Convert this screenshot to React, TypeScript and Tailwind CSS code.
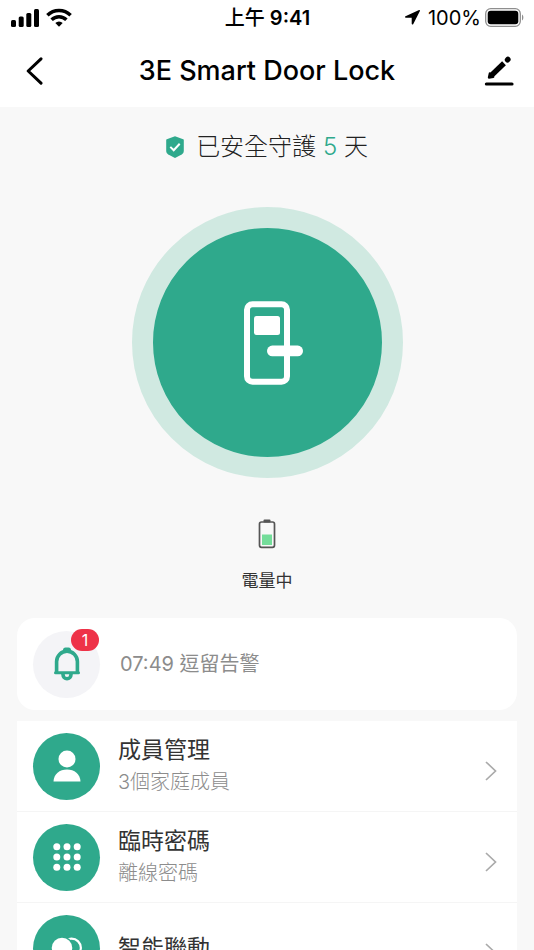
import type { ReactNode } from "react";

interface MenuRowProps {
  title: string;
  subtitle?: string;
  icon: ReactNode;
}

function SignalIcon() {
  return (
    <svg width="28" height="18" viewBox="0 0 28 18" fill="currentColor" aria-hidden="true">
      <rect x="0" y="11" width="5" height="7" rx="1.5" />
      <rect x="7.7" y="7.5" width="5" height="10.5" rx="1.5" />
      <rect x="15.3" y="4" width="5" height="14" rx="1.5" />
      <rect x="23" y="0" width="5" height="18" rx="1.5" />
    </svg>
  );
}

function WifiIcon() {
  return (
    <svg width="26" height="19" viewBox="0 0 26 19" fill="none" stroke="currentColor" strokeWidth="3.5" aria-hidden="true">
      <path d="M1.4 7.2a16.6 16.6 0 0 1 23.2 0" />
      <path d="M5.6 11.8a10.6 10.6 0 0 1 14.8 0" />
      <path d="M13 18.8l-3.7-3.7a5.3 5.3 0 0 1 7.4 0z" fill="currentColor" stroke="none" />
    </svg>
  );
}

function LocationIcon() {
  return (
    <svg width="15" height="15" viewBox="0 0 15 15" fill="currentColor" aria-hidden="true">
      <path d="M14.1.1.5 6.3c-.8.4-.6 1.5.3 1.5h5.6c.2 0 .3.1.3.3v5.7c0 .9 1.200 1.1 1.6.3L14.9 1c.3-.6-.2-1.1-.8-.9z" />
    </svg>
  );
}

function FullBatteryIcon() {
  return (
    <svg width="39" height="19" viewBox="0 0 39 19" aria-hidden="true">
      <rect x="0.7" y="0.7" width="34.6" height="17.6" rx="5" fill="none" stroke="#8e8e8e" strokeWidth="1.3" />
      <rect x="2.7" y="2.7" width="30.6" height="13.6" rx="3" fill="#000" />
      <path d="M37 6.5v6c1.8-.8 1.8-5.2 0-6z" fill="#8e8e8e" />
    </svg>
  );
}

function StatusBar() {
  return (
    <div className="grid h-[35px] grid-cols-3 items-center pr-[10px] pl-[11px] text-xl text-black">
      <div className="flex items-center gap-[7px]">
        <SignalIcon />
        <WifiIcon />
      </div>
      <div className="text-center font-semibold whitespace-nowrap">
        <span className="font-medium">上午</span> 9:41
      </div>
      <div className="flex items-center justify-end">
        <LocationIcon />
        <span className="mr-1 ml-2">100%</span>
        <FullBatteryIcon />
      </div>
    </div>
  );
}

function Header() {
  return (
    <header className="flex h-[72px] items-center justify-between px-5">
      <button type="button" aria-label="返回" className="flex w-8 justify-start pl-[6px]">
        <svg width="17" height="28" viewBox="0 0 17 28" fill="none" stroke="#000" strokeWidth="3" strokeLinecap="round" strokeLinejoin="round">
          <path d="M15 1.8 2.2 14 15 26.2" />
        </svg>
      </button>
      <h1 className="text-[27px] font-medium text-black">3E Smart Door Lock</h1>
      <button type="button" aria-label="編輯" className="flex w-8 justify-end">
        <svg width="30" height="30" viewBox="0 0 30 30" fill="none" stroke="#000" strokeLinecap="round">
          <path d="M7.8 19 20 7.2" strokeWidth="5.4" strokeLinecap="butt" />
          <path d="M5.8 17.4 4.900 21.600 9.300 21z" fill="#000" strokeWidth="2.200" strokeLinejoin="round" />
          <path d="M23.5 3.8l.4-.4" strokeWidth="5.4" />
          <path d="M2.4 28H28" strokeWidth="3.2" />
        </svg>
      </button>
    </header>
  );
}

function ShieldIcon() {
  return (
    <svg width="18" height="22" viewBox="0 0 18 22" aria-hidden="true">
      <path d="M9 .3 17.2 3.2c.4.2.6.5.6.9v10.6c0 1.6-.8 2.9-2.1 3.7L9 21.9l-6.7-3.5C1 17.6.2 16.3.2 14.7V4.1c0-.4.2-.7.6-.9z" fill="#2fa98c" />
      <path d="m4.3 10.9 3.4 3.3 6-6.5" fill="none" stroke="#fff" strokeWidth="2" />
    </svg>
  );
}

function DoorLockIcon() {
  return (
    <svg width="60" height="84" viewBox="0 0 60 84" fill="none" aria-hidden="true">
      <rect x="4" y="3.3" width="40" height="77.4" rx="5.5" stroke="#fff" strokeWidth="6" />
      <rect x="11" y="15" width="26" height="19" rx="2.5" fill="#fff" />
      <rect x="24" y="44.600" width="36" height="10.6" rx="5.3" fill="#fff" />
    </svg>
  );
}

function BatteryLevelIcon() {
  return (
    <svg width="18" height="30" viewBox="0 0 18 30" fill="none" aria-hidden="true">
      <rect x="5.5" y="0.5" width="7" height="3" rx="1" fill="#555" />
      <rect x="1.5" y="3" width="15" height="25.3" rx="2" stroke="#555" strokeWidth="1.7" />
      <rect x="4" y="15.5" width="10" height="10.5" fill="#74dd9a" />
    </svg>
  );
}

function BellIcon() {
  return (
    <svg width="28" height="34" viewBox="0 0 28 34" fill="none" stroke="#2fa98c" strokeWidth="3.6" aria-hidden="true">
      <path d="M10 4.5V3a2.5 2.5 0 0 1 2.5-2.5h3A2.500 2.500 0 0 1 18 3v1.500z" fill="#2fa98c" stroke="none" />
      <path d="M3.6 25.4V14.5a10.4 10.4 0 0 1 20.8 0v10.9" />
      <path d="M2.500 25.700h23" strokeLinecap="round" strokeWidth="3" />
      <path d="M10 26.5v1a4 4.300 0 0 0 8 0v-1" />
    </svg>
  );
}

function MemberIcon() {
  return (
    <svg width="28" height="32" viewBox="0 0 28 32" fill="#fff" aria-hidden="true">
      <circle cx="14" cy="9" r="8.5" />
      <path d="M.5 31.5C.7 24.2 6.6 19.5 14 19.5s13.3 4.7 13.5 12z" />
    </svg>
  );
}

function KeypadIcon() {
  return (
    <svg width="28" height="28" viewBox="0 0 28 28" fill="#fff" aria-hidden="true">
      {[3.8, 14, 24.2].map((cy) =>
        [3.8, 14, 24.2].map((cx) => <circle key={`${cx}-${cy}`} cx={cx} cy={cy} r="3.5" />),
      )}
    </svg>
  );
}

function LinkageIcon() {
  return (
    <svg width="32" height="22" viewBox="0 0 32 22" fill="none" aria-hidden="true">
      <circle cx="20.5" cy="11" r="9.4" stroke="#fff" strokeWidth="2.2" />
      <circle cx="12" cy="11" r="11" fill="#2fa98c" />
      <circle cx="11" cy="11" r="10.3" fill="#fff" />
    </svg>
  );
}

function MenuRow({ title, subtitle, icon }: MenuRowProps) {
  return (
    <li className="border-b border-[#f5f5f5]">
      <a href="#" className="flex h-[90px] items-center pr-5 pl-4">
        <span className="flex size-[67px] shrink-0 items-center justify-center rounded-full bg-[#2fa98c]">
          {icon}
        </span>
        <span className="ml-[18px] flex flex-1 flex-col">
          <span className="text-[23px] leading-8 text-[#333]">{title}</span>
          {subtitle && <span className="text-xl leading-8 font-light text-[#8c8c8c]">{subtitle}</span>}
        </span>
        <svg className="mt-[10px]" width="12" height="20" viewBox="0 0 12 20" fill="none" stroke="#aaa" strokeWidth="1.7" aria-hidden="true">
          <path d="m1 1 9.5 9L1 19" />
        </svg>
      </a>
    </li>
  );
}

export default function App() {
  return (
    <div className="min-h-screen bg-[#f8f8f8] font-[Inter,'Noto_Sans_CJK_TC',sans-serif]">
      <div className="bg-white">
        <StatusBar />
        <Header />
      </div>

      <main className="px-[17px]">
        <section className="flex flex-col items-center">
          <p className="mt-6 flex items-center gap-3 text-2xl leading-8 font-light text-[#222]">
            <ShieldIcon />
            <span>
              已安全守護 <span className="text-[#2fa98c]">5</span> 天
            </span>
          </p>
          <button
            type="button"
            aria-label="開鎖"
            className="mt-11 flex size-[271px] items-center justify-center rounded-full border-[21px] border-[#d0e9e1] bg-[#2fa98c] pl-3"
          >
            <DoorLockIcon />
          </button>
          <div className="mt-[41px] flex flex-col items-center gap-5 text-[17px] leading-6 text-[#333]">
            <BatteryLevelIcon />
            <span>電量中</span>
          </div>
        </section>

        <section className="mt-[25px] flex h-[92px] items-center rounded-[18px] bg-white px-4">
          <div className="relative flex size-[67px] items-center justify-center rounded-full bg-[#f4f4f7]">
            <BellIcon />
            <span className="absolute -top-[2px] right-px flex h-[22px] w-7 items-center justify-center rounded-full bg-[#ee3248] text-base text-white">
              1
            </span>
          </div>
          <p className="ml-5 text-xl text-[#8c8c8c]">07:49 逗留告警</p>
        </section>

        <ul className="mt-[11px] bg-white">
          <MenuRow title="成員管理" subtitle="3個家庭成員" icon={<MemberIcon />} />
          <MenuRow title="臨時密碼" subtitle="離線密碼" icon={<KeypadIcon />} />
          <MenuRow title="智能聯動" icon={<LinkageIcon />} />
        </ul>
      </main>
    </div>
  );
}
